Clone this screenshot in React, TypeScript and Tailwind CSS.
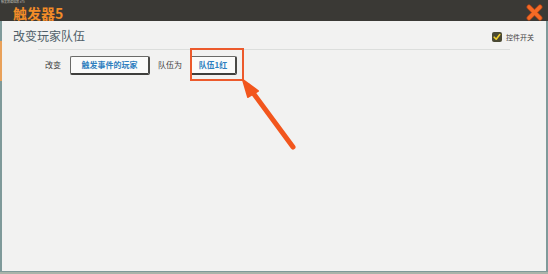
import React from "react";

const font = { fontFamily: '"Noto Sans CJK SC", "Noto Sans", sans-serif' };

function GameButton({ label, width }: { label: string; width: string }) {
  return (
    <div
      className={`${width} h-[19px] flex items-center justify-center bg-[#fbfbfa] border border-[#6b6b68] border-b-2 border-r-2 border-b-[#3f3f3c] border-r-[#4a4a47] rounded-[2px] text-[8px] font-semibold text-[#2f7fbf]`}
    >
      {label}
    </div>
  );
}

export default function App() {
  return (
    <div className="w-[548px] h-[274px] bg-[#a9b3a9] flex flex-col overflow-hidden" style={font}>
      {/* title bar */}
      <div className="relative h-[21px] bg-[#3a3935] flex items-center justify-between pl-[13px] pr-[5px] shrink-0">
        <span className="absolute left-[1px] top-0 text-[3px] leading-[4px] text-[#bdbdb5]">触发器编辑器 #75</span>
        <span className="text-[14px] font-bold leading-none text-[#f28c28] mt-[5px]">触发器5</span>
        <svg width="17" height="17" viewBox="0 0 17 17" className="mt-[3px]">
          <path d="M3 3 L14 14 M14 3 L3 14" stroke="#a8431a" strokeWidth="5" strokeLinecap="round" />
          <path d="M3 3 L14 14 M14 3 L3 14" stroke="#f56a25" strokeWidth="3.6" strokeLinecap="round" />
        </svg>
      </div>

      {/* panel */}
      <div className="relative flex-1 mb-[2px] bg-[#f2f2f1] border-l-[2px] border-r-[2px] border-b border-[#7f9a9a] flex flex-col">
        <div className="absolute left-[-2px] top-[20px] w-[2px] h-[40px] bg-[#e9a15a]" />
        <div className="flex items-center justify-between pl-[11px] pr-[12px] pt-[9px]">
          <span className="text-[12px] leading-none text-[#4f5e68]">改变玩家队伍</span>
          <div className="flex items-center gap-[4px] mt-[2px]">
            <div className="w-[10px] h-[10px] rounded-[2px] bg-[#4b4a33] flex items-center justify-center">
              <svg width="8" height="8" viewBox="0 0 8 8">
                <path d="M1.2 4.2 L3.2 6.2 L6.8 1.6" stroke="#f3d22b" strokeWidth="1.6" fill="none" strokeLinecap="round" strokeLinejoin="round" />
              </svg>
            </div>
            <span className="text-[7px] text-[#444]">控件开关</span>
          </div>
        </div>
        <div className="ml-[36px] mr-[36px] mt-[6px] h-px bg-[#dcdedc]" />

        <div className="relative flex items-center pl-[43px] mt-[6px]">
          <span className="text-[8px] text-[#3f3f3f]">改变</span>
          <div className="ml-[9px]">
            <GameButton label="触发事件的玩家" width="w-[80px]" />
          </div>
          <span className="ml-[8px] text-[8px] text-[#3f3f3f]">队伍为</span>
          <div className="ml-[8px]">
            <GameButton label="队伍1红" width="w-[47px]" />
          </div>
          <div className="absolute left-[188px] top-[-8px] w-[54px] h-[33px] border-2 border-[#ec5a2c]" />
        </div>

        <svg className="absolute left-0 top-0 pointer-events-none" width="548" height="252">
          <path d="M291 126 L246 65" stroke="#f2561d" strokeWidth="5" strokeLinecap="round" />
          <path d="M241 59 L256 70 L246 76 Z" fill="#f2561d" stroke="#f2561d" strokeWidth="2" strokeLinejoin="round" />
        </svg>
      </div>
    </div>
  );
}
